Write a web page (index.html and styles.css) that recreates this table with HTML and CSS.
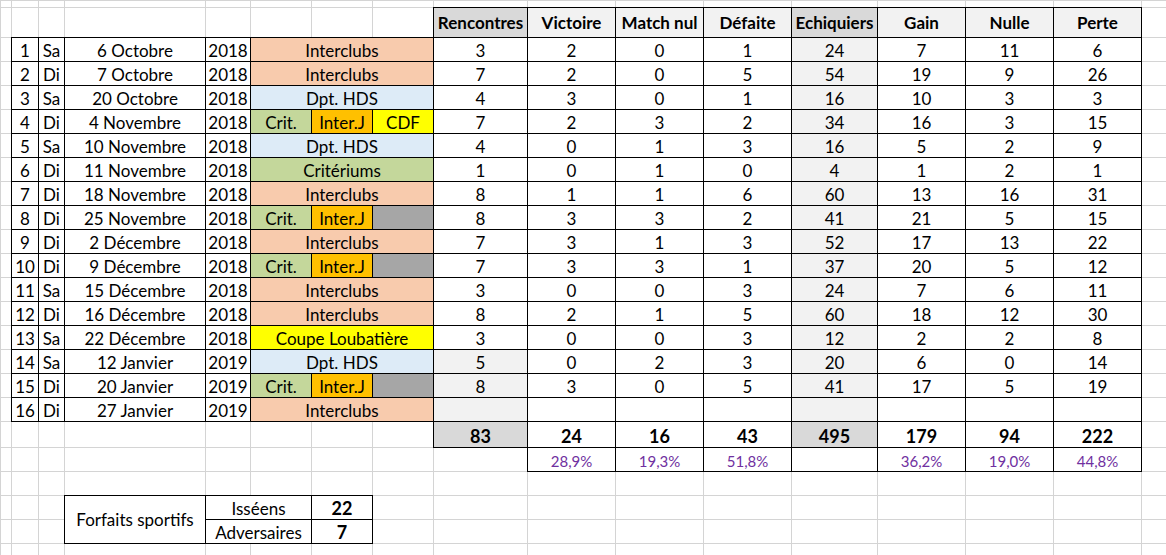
FILE: index.html
```html
<!DOCTYPE html>
<html lang="fr">
<head>
<meta charset="utf-8">
<link rel="stylesheet" href="styles.css">
</head>
<body>
<table class="sheet">
<colgroup>
<col class="c0"><col class="ca"><col class="cb"><col class="cc"><col class="cd"><col class="ce"><col class="ce"><col class="ce"><col class="ch"><col class="cn"><col class="cn"><col class="cn"><col class="cl"><col class="cn"><col class="cn"><col class="cn"><col class="cp">
</colgroup>
<tbody>
<tr class="r-top"><td></td><td></td><td></td><td></td><td></td><td></td><td></td><td></td><td></td><td></td><td></td><td></td><td></td><td></td><td></td><td></td><td></td></tr>
<tr class="r-head">
<td></td><td></td><td></td><td></td><td></td><td></td><td></td><td></td>
<td class="k hd dk">Rencontres</td><td class="k hd">Victoire</td><td class="k hd">Match nul</td><td class="k hd">Défaite</td><td class="k hd dk">Echiquiers</td><td class="k hd">Gain</td><td class="k hd">Nulle</td><td class="k hd">Perte</td><td></td>
</tr>
<tr><td></td><td class="k">1</td><td class="k">Sa</td><td class="k">6 Octobre</td><td class="k">2018</td><td class="k inter" colspan="3">Interclubs</td><td class="k">3</td><td class="k">2</td><td class="k">0</td><td class="k">1</td><td class="k lt">24</td><td class="k">7</td><td class="k">11</td><td class="k">6</td><td></td></tr>
<tr><td></td><td class="k">2</td><td class="k">Di</td><td class="k">7 Octobre</td><td class="k">2018</td><td class="k inter" colspan="3">Interclubs</td><td class="k">7</td><td class="k">2</td><td class="k">0</td><td class="k">5</td><td class="k lt">54</td><td class="k">19</td><td class="k">9</td><td class="k">26</td><td></td></tr>
<tr><td></td><td class="k">3</td><td class="k">Sa</td><td class="k">20 Octobre</td><td class="k">2018</td><td class="k dpt" colspan="3">Dpt. HDS</td><td class="k">4</td><td class="k">3</td><td class="k">0</td><td class="k">1</td><td class="k lt">16</td><td class="k">10</td><td class="k">3</td><td class="k">3</td><td></td></tr>
<tr><td></td><td class="k">4</td><td class="k">Di</td><td class="k">4 Novembre</td><td class="k">2018</td><td class="k crit">Crit.</td><td class="k ij">Inter.J</td><td class="k cdf">CDF</td><td class="k">7</td><td class="k">2</td><td class="k">3</td><td class="k">2</td><td class="k lt">34</td><td class="k">16</td><td class="k">3</td><td class="k">15</td><td></td></tr>
<tr><td></td><td class="k">5</td><td class="k">Sa</td><td class="k">10 Novembre</td><td class="k">2018</td><td class="k dpt" colspan="3">Dpt. HDS</td><td class="k">4</td><td class="k">0</td><td class="k">1</td><td class="k">3</td><td class="k lt">16</td><td class="k">5</td><td class="k">2</td><td class="k">9</td><td></td></tr>
<tr><td></td><td class="k">6</td><td class="k">Di</td><td class="k">11 Novembre</td><td class="k">2018</td><td class="k crit" colspan="3">Critériums</td><td class="k">1</td><td class="k">0</td><td class="k">1</td><td class="k">0</td><td class="k lt">4</td><td class="k">1</td><td class="k">2</td><td class="k">1</td><td></td></tr>
<tr><td></td><td class="k">7</td><td class="k">Di</td><td class="k">18 Novembre</td><td class="k">2018</td><td class="k inter" colspan="3">Interclubs</td><td class="k">8</td><td class="k">1</td><td class="k">1</td><td class="k">6</td><td class="k lt">60</td><td class="k">13</td><td class="k">16</td><td class="k">31</td><td></td></tr>
<tr><td></td><td class="k">8</td><td class="k">Di</td><td class="k">25 Novembre</td><td class="k">2018</td><td class="k crit">Crit.</td><td class="k ij">Inter.J</td><td class="k gr"></td><td class="k">8</td><td class="k">3</td><td class="k">3</td><td class="k">2</td><td class="k lt">41</td><td class="k">21</td><td class="k">5</td><td class="k">15</td><td></td></tr>
<tr><td></td><td class="k">9</td><td class="k">Di</td><td class="k">2 Décembre</td><td class="k">2018</td><td class="k inter" colspan="3">Interclubs</td><td class="k">7</td><td class="k">3</td><td class="k">1</td><td class="k">3</td><td class="k lt">52</td><td class="k">17</td><td class="k">13</td><td class="k">22</td><td></td></tr>
<tr><td></td><td class="k">10</td><td class="k">Di</td><td class="k">9 Décembre</td><td class="k">2018</td><td class="k crit">Crit.</td><td class="k ij">Inter.J</td><td class="k gr"></td><td class="k">7</td><td class="k">3</td><td class="k">3</td><td class="k">1</td><td class="k lt">37</td><td class="k">20</td><td class="k">5</td><td class="k">12</td><td></td></tr>
<tr><td></td><td class="k">11</td><td class="k">Sa</td><td class="k">15 Décembre</td><td class="k">2018</td><td class="k inter" colspan="3">Interclubs</td><td class="k">3</td><td class="k">0</td><td class="k">0</td><td class="k">3</td><td class="k lt">24</td><td class="k">7</td><td class="k">6</td><td class="k">11</td><td></td></tr>
<tr><td></td><td class="k">12</td><td class="k">Di</td><td class="k">16 Décembre</td><td class="k">2018</td><td class="k inter" colspan="3">Interclubs</td><td class="k">8</td><td class="k">2</td><td class="k">1</td><td class="k">5</td><td class="k lt">60</td><td class="k">18</td><td class="k">12</td><td class="k">30</td><td></td></tr>
<tr><td></td><td class="k">13</td><td class="k">Sa</td><td class="k">22 Décembre</td><td class="k">2018</td><td class="k yel" colspan="3">Coupe Loubatière</td><td class="k">3</td><td class="k">0</td><td class="k">0</td><td class="k">3</td><td class="k lt">12</td><td class="k">2</td><td class="k">2</td><td class="k">8</td><td></td></tr>
<tr><td></td><td class="k">14</td><td class="k">Sa</td><td class="k">12 Janvier</td><td class="k">2019</td><td class="k dpt" colspan="3">Dpt. HDS</td><td class="k lt">5</td><td class="k">0</td><td class="k">2</td><td class="k">3</td><td class="k lt">20</td><td class="k">6</td><td class="k">0</td><td class="k">14</td><td></td></tr>
<tr><td></td><td class="k">15</td><td class="k">Di</td><td class="k">20 Janvier</td><td class="k">2019</td><td class="k crit">Crit.</td><td class="k ij">Inter.J</td><td class="k gr"></td><td class="k lt">8</td><td class="k">3</td><td class="k">0</td><td class="k">5</td><td class="k lt">41</td><td class="k">17</td><td class="k">5</td><td class="k">19</td><td></td></tr>
<tr><td></td><td class="k">16</td><td class="k">Di</td><td class="k">27 Janvier</td><td class="k">2019</td><td class="k inter" colspan="3">Interclubs</td><td class="k lt"></td><td class="k"></td><td class="k"></td><td class="k"></td><td class="k lt"></td><td class="k"></td><td class="k"></td><td class="k"></td><td></td></tr>
<tr class="r-tot"><td></td><td></td><td></td><td></td><td></td><td></td><td></td><td></td><td class="k tot dk">83</td><td class="k tot">24</td><td class="k tot">16</td><td class="k tot">43</td><td class="k tot dk">495</td><td class="k tot">179</td><td class="k tot">94</td><td class="k tot">222</td><td></td></tr>
<tr><td></td><td></td><td></td><td></td><td></td><td></td><td></td><td></td><td></td><td class="k pct">28,9%</td><td class="k pct">19,3%</td><td class="k pct">51,8%</td><td class="k"></td><td class="k pct">36,2%</td><td class="k pct">19,0%</td><td class="k pct">44,8%</td><td></td></tr>
<tr><td></td><td></td><td></td><td></td><td></td><td></td><td></td><td></td><td></td><td></td><td></td><td></td><td></td><td></td><td></td><td></td><td></td></tr>
<tr><td></td><td></td><td></td><td class="k mid" rowspan="2">Forfaits sportifs</td><td class="k" colspan="2">Isséens</td><td class="k tot">22</td><td></td><td></td><td></td><td></td><td></td><td></td><td></td><td></td><td></td><td></td></tr>
<tr><td></td><td></td><td></td><td class="k" colspan="2">Adversaires</td><td class="k tot">7</td><td></td><td></td><td></td><td></td><td></td><td></td><td></td><td></td><td></td><td></td></tr>
<tr><td></td><td></td><td></td><td></td><td></td><td></td><td></td><td></td><td></td><td></td><td></td><td></td><td></td><td></td><td></td><td></td><td></td></tr>
</tbody>
</table>
</body>
</html>
```

FILE: styles.css
```css
html, body {
  margin: 0;
  padding: 0;
  background: #ffffff;
  overflow: hidden;
}

body {
  width: 1166px;
  height: 555px;
  font-family: Lato, "Liberation Sans", sans-serif;
  font-size: 17px;
  color: #000000;
}

.sheet {
  border-collapse: collapse;
  table-layout: fixed;
  width: 1181px;
}

.c0 { width: 11px; }
.ca { width: 27px; }
.cb { width: 26px; }
.cc { width: 141px; }
.cd { width: 45px; }
.ce { width: 61px; }
.ch { width: 94px; }
.cn { width: 88px; }
.cl { width: 86px; }
.cp { width: 40px; }

.sheet tr { height: 24px; }
.sheet tr.r-top { height: 7px; }
.sheet tr.r-head { height: 30px; }
.sheet tr.r-tot { height: 26px; }

.sheet td {
  border: 1px solid #d4d4d4;
  padding: 0;
  text-align: center;
  vertical-align: bottom;
  white-space: nowrap;
  overflow: hidden;
  line-height: 20px;
}

.sheet td.k { border: 1px double #000000; }

.sheet td.hd {
  font-weight: bold;
  background: #f2f2f2;
  vertical-align: middle;
}
.sheet td.hd.dk, .sheet td.tot.dk { background: #d9d9d9; }
.lt { background: #f2f2f2; }

.inter { background: #f8cbad; }
.dpt { background: #ddebf7; }
.crit { background: #c4d79b; }
.ij { background: #ffc000; }
.cdf, .yel { background: #ffff00; }
.gr { background: #a6a6a6; }

.sheet td.tot {
  font-weight: bold;
  font-size: 18px;
  padding-bottom: 1px;
}

.pct {
  color: #7030a0;
  font-size: 15px;
}

.sheet td.mid { vertical-align: middle; }
```
